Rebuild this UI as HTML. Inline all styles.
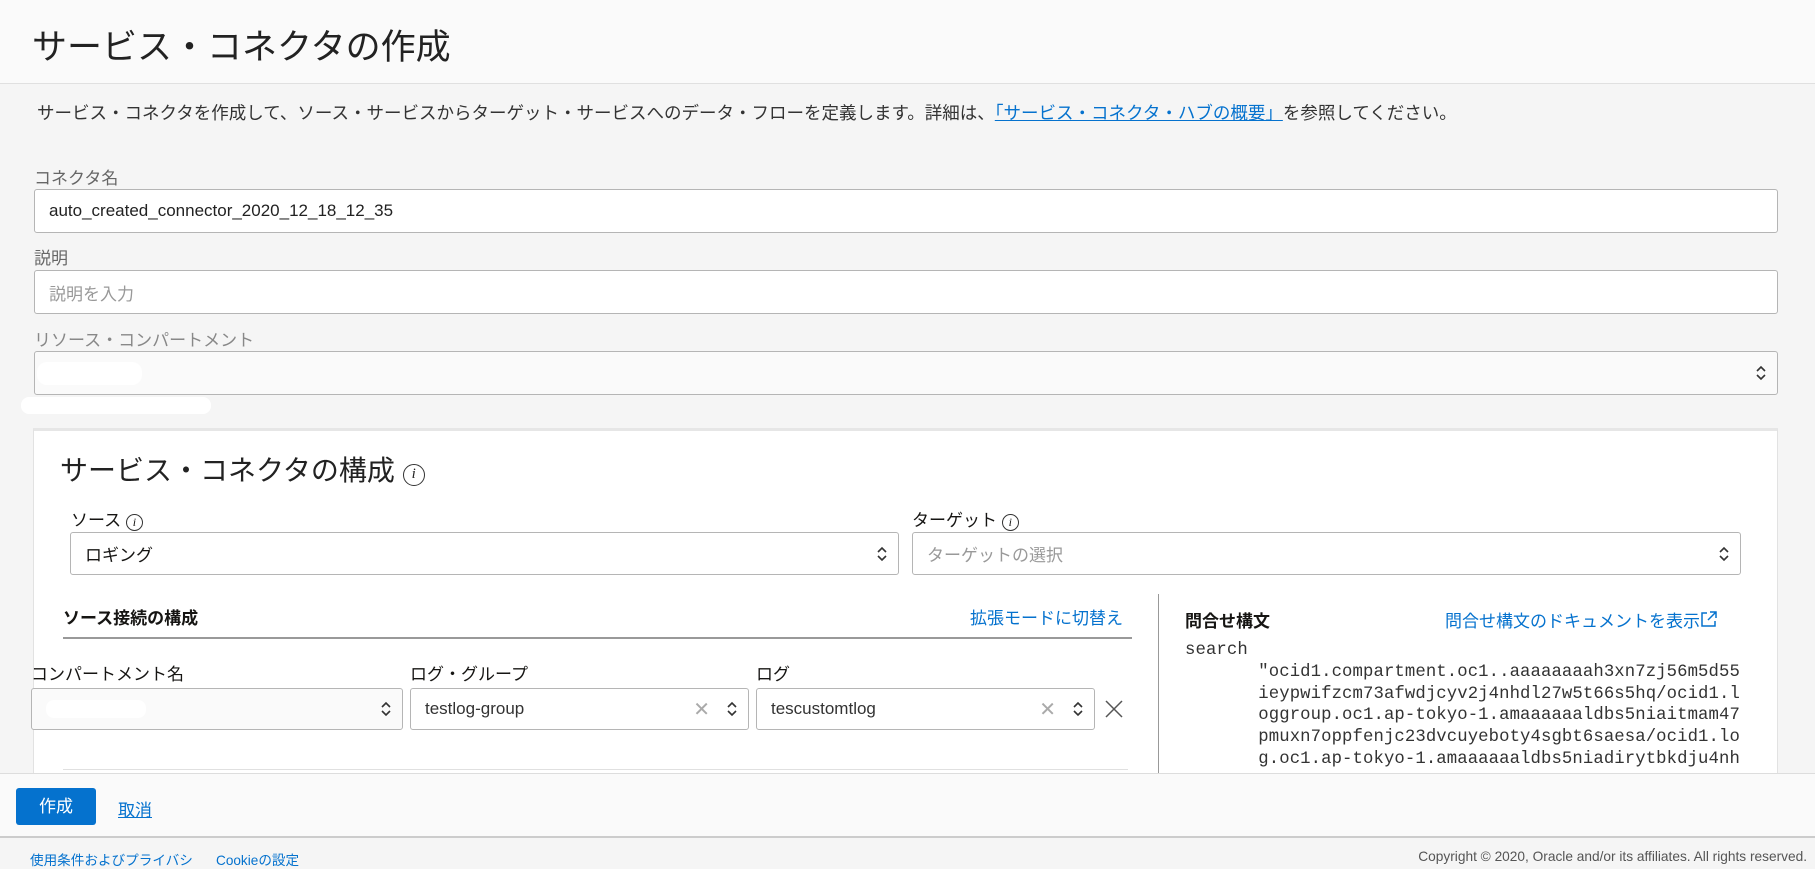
<!DOCTYPE html>
<html><head><meta charset="utf-8"><style>
*{box-sizing:border-box;margin:0;padding:0}
body{width:1815px;height:868px;overflow:hidden;background:#f5f5f5;font-family:"Liberation Sans","Noto Sans CJK JP",sans-serif;color:#161513;position:relative}
.a{position:absolute}
.hdr{left:0;top:0;width:1815px;height:84px;background:#fafafa;border-bottom:1px solid #e0e0e0}
.inp{position:absolute;background:#fff;border:1px solid #b5b5b5;border-radius:3px;font-size:17px;padding-left:14px;display:flex;align-items:center}
.lbl{position:absolute;font-size:17px;color:#666}
.chev{position:absolute;right:10px;top:50%;transform:translateY(-50%);width:12px;height:20px}
.blue{color:#0572ce}
</style></head><body>
<div class="a hdr"></div>
<div class="a" style="left:32px;top:19px;font-size:35px;color:#222">サービス・コネクタの作成</div>
<div class="a" style="left:37px;top:100px;font-size:17.5px;color:#333">サービス・コネクタを作成して、ソース・サービスからターゲット・サービスへのデータ・フローを定義します。詳細は、<span class="blue" style="text-decoration:underline">「サービス・コネクタ・ハブの概要」</span>を参照してください。</div>

<div class="lbl" style="left:34px;top:164px">コネクタ名</div>
<div class="inp" style="left:34px;top:189px;width:1744px;height:44px;color:#222">auto_created_connector_2020_12_18_12_35</div>
<div class="lbl" style="left:34px;top:244px">説明</div>
<div class="inp" style="left:34px;top:270px;width:1744px;height:44px;color:#999">説明を入力</div>
<div class="lbl" style="left:34px;top:326px;color:#888">リソース・コンパートメント</div>
<div class="inp" style="left:34px;top:351px;width:1744px;height:44px;background:#fafafa"><svg class="chev" viewBox="0 0 12 20"><path d="M2 8l4-4 4 4M2 12l4 4 4-4" fill="none" stroke="#333" stroke-width="1.6"/></svg></div>
<div class="a" style="left:37px;top:362px;width:105px;height:23px;background:#fff;border-radius:10px"></div>
<div class="a" style="left:21px;top:397px;width:190px;height:17px;background:#fff;border-radius:8px"></div>

<div class="a" style="left:33px;top:428px;width:1745px;height:350px;background:#fff;border:1px solid #e2e2e2;border-top:3px solid #e6e6e6"></div>
<div class="a" style="left:60px;top:449px;font-size:28px;color:#222">サービス・コネクタの構成 <span style="display:inline-block;width:22px;height:22px;border:1.5px solid #333;border-radius:50%;font-size:15px;text-align:center;line-height:19px;font-style:italic;font-family:'Liberation Serif',serif;vertical-align:2px">i</span></div>
<div class="a" style="left:71px;top:506px;font-size:17px">ソース <span style="display:inline-block;width:17px;height:17px;border:1.3px solid #333;border-radius:50%;font-size:12px;text-align:center;line-height:15px;font-style:italic;font-family:'Liberation Serif',serif">i</span></div>
<div class="a" style="left:912px;top:506px;font-size:17px">ターゲット <span style="display:inline-block;width:17px;height:17px;border:1.3px solid #333;border-radius:50%;font-size:12px;text-align:center;line-height:15px;font-style:italic;font-family:'Liberation Serif',serif">i</span></div>
<div class="inp" style="left:70px;top:532px;width:829px;height:43px">ロギング<svg class="chev" viewBox="0 0 12 20"><path d="M2 8l4-4 4 4M2 12l4 4 4-4" fill="none" stroke="#333" stroke-width="1.6"/></svg></div>
<div class="inp" style="left:912px;top:532px;width:829px;height:43px;color:#999">ターゲットの選択<svg class="chev" viewBox="0 0 12 20"><path d="M2 8l4-4 4 4M2 12l4 4 4-4" fill="none" stroke="#333" stroke-width="1.6"/></svg></div>

<div class="a" style="left:63px;top:604px;font-size:17px;font-weight:bold">ソース接続の構成</div>
<div class="a blue" style="left:970px;top:604px;font-size:17px">拡張モードに切替え</div>
<div class="a" style="left:63px;top:637px;width:1069px;height:2px;background:#999"></div>
<div class="a" style="left:1158px;top:594px;width:1px;height:180px;background:#999"></div>

<div class="a" style="left:31px;top:660px;font-size:17px">コンパートメント名</div>
<div class="a" style="left:410px;top:660px;font-size:17px">ログ・グループ</div>
<div class="a" style="left:756px;top:660px;font-size:17px">ログ</div>
<div class="inp" style="left:31px;top:688px;width:372px;height:42px;background:#fafafa"><div style="width:100px;height:18px;background:#fff;border-radius:8px"></div><svg class="chev" viewBox="0 0 12 20"><path d="M2 8l4-4 4 4M2 12l4 4 4-4" fill="none" stroke="#333" stroke-width="1.6"/></svg></div>
<div class="inp" style="left:410px;top:688px;width:339px;height:42px;color:#333">testlog-group<span style="position:absolute;right:38px;color:#aaa;font-size:20px">✕</span><svg class="chev" viewBox="0 0 12 20"><path d="M2 8l4-4 4 4M2 12l4 4 4-4" fill="none" stroke="#333" stroke-width="1.6"/></svg></div>
<div class="inp" style="left:756px;top:688px;width:339px;height:42px;color:#333">tescustomtlog<span style="position:absolute;right:38px;color:#aaa;font-size:20px">✕</span><svg class="chev" viewBox="0 0 12 20"><path d="M2 8l4-4 4 4M2 12l4 4 4-4" fill="none" stroke="#333" stroke-width="1.6"/></svg></div>
<svg class="a" style="left:1104px;top:699px" width="20" height="20" viewBox="0 0 20 20"><path d="M2 2l16 16M18 2L2 18" stroke="#555" stroke-width="1.5"/></svg>
<div class="a" style="left:63px;top:769px;width:1065px;height:1px;background:#e0e0e0"></div>

<div class="a" style="left:1185px;top:607px;font-size:17px;font-weight:bold">問合せ構文</div>
<div class="a blue" style="left:1445px;top:607px;font-size:17px">問合せ構文のドキュメントを表示<svg width="18" height="18" viewBox="0 0 18 18" style="vertical-align:-1px"><path d="M7 3H2v13h13v-5M10 2h6v6M16 2L8 10" fill="none" stroke="#0572ce" stroke-width="1.5"/></svg></div>
<div class="a" style="left:1185px;top:640px;font-family:'Liberation Mono',monospace;font-size:17.3px;line-height:21.8px;color:#333;white-space:pre;letter-spacing:0.1px">search
       "ocid1.compartment.oc1..aaaaaaaah3xn7zj56m5d55
       ieypwifzcm73afwdjcyv2j4nhdl27w5t66s5hq/ocid1.l
       oggroup.oc1.ap-tokyo-1.amaaaaaaldbs5niaitmam47
       pmuxn7oppfenjc23dvcuyeboty4sgbt6saesa/ocid1.lo
       g.oc1.ap-tokyo-1.amaaaaaaldbs5niadirytbkdju4nh</div>

<div class="a" style="left:0;top:773px;width:1815px;height:65px;background:#fafafa;border-top:1px solid #ddd;border-bottom:2px solid #ccc"></div>
<div class="a" style="left:16px;top:788px;width:80px;height:37px;background:#0572ce;border-radius:3px;color:#fff;font-size:17px;text-align:center;line-height:37px">作成</div>
<div class="a blue" style="left:118px;top:796px;font-size:17px;text-decoration:underline">取消</div>
<div class="a blue" style="left:30px;top:849px;font-size:13.6px">使用条件およびプライバシ</div>
<div class="a blue" style="left:216px;top:849px;font-size:13.6px">Cookieの設定</div>
<div class="a" style="right:8px;top:849px;font-size:13.7px;color:#555">Copyright © 2020, Oracle and/or its affiliates. All rights reserved.</div>
</body></html>
